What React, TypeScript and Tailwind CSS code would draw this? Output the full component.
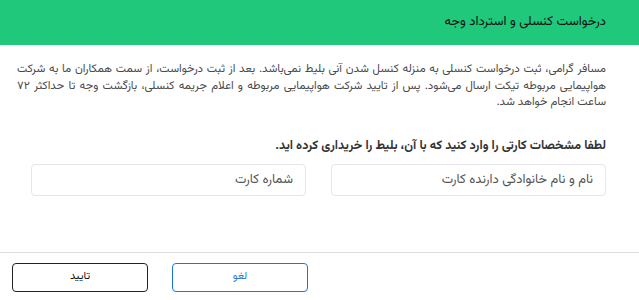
const fa = { fontFamily: '"Vazirmatn", "Noto Sans Arabic", "DejaVu Sans", sans-serif' };

function Field({ placeholder }: { placeholder: string }) {
    return (
        <input
            type="text"
            placeholder={placeholder}
            className="h-[32px] w-[275px] rounded border border-[#e6e4ee] bg-white px-3 text-[13px] text-[#444] placeholder:text-[#555] outline-none"
            style={fa}
        />
    );
}

export default function App() {
    return (
        <div className="flex h-[300px] w-[639px] flex-col bg-white" style={fa}>
            <div dir="rtl" className="flex h-[45px] items-center bg-[#20c87c] pr-[33px]">
                <h2 className="text-[13px] text-[#111]">درخواست کنسلی و استرداد وجه</h2>
            </div>

            <div dir="rtl" className="h-[207px] pl-[17px] pr-[33px] pt-[16px]">
                <div className="text-[11.5px] leading-[16.5px] text-[#4a4a4a]">
                    <p className="text-justify [text-align-last:justify]">
                        مسافر گرامی، ثبت درخواست کنسلی به منزله کنسل شدن آنی بلیط نمی‌باشد. بعد از ثبت درخواست، از سمت همکاران ما به شرکت
                    </p>
                    <p className="text-justify [text-align-last:justify]">
                        هواپیمایی مربوطه تیکت ارسال می‌شود. پس از تایید شرکت هواپیمایی مربوطه و اعلام جریمه کنسلی، بازگشت وجه تا حداکثر ۷۲
                    </p>
                    <p>ساعت انجام خواهد شد.</p>
                </div>
                <p className="mt-[27px] text-[12.5px] font-bold leading-[17px] text-[#333]">
                    لطفا مشخصات کارتی را وارد کنید که با آن، بلیط را خریداری کرده اید.
                </p>
                <div className="mt-[9px] flex gap-[25px] pl-[14px]">
                    <Field placeholder="نام و نام خانوادگی دارنده کارت" />
                    <Field placeholder="شماره کارت" />
                </div>
            </div>

            <div className="flex flex-1 gap-[24px] border-t border-[#dedede] pl-[12px] pt-[10px]">
                <button className="h-[29px] w-[136px] rounded border border-[#222] text-[11px] text-[#111]">
                    تایید
                </button>
                <button className="h-[29px] w-[136px] rounded border border-[#1e78d2] text-[11px] text-[#1e78d2]">
                    لغو
                </button>
            </div>
        </div>
    );
}
